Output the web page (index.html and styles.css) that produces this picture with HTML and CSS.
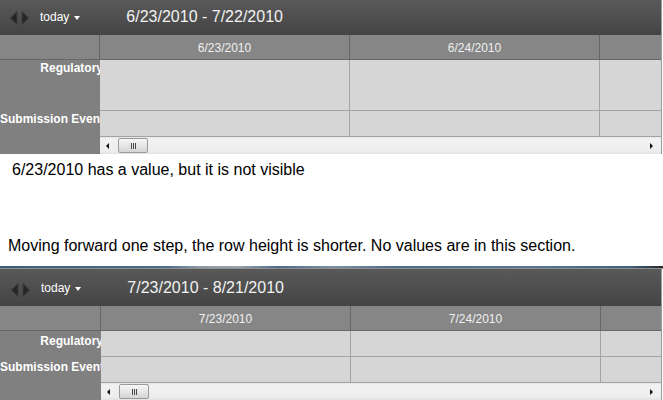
FILE: index.html
```html
<!DOCTYPE html>
<html>
<head>
<meta charset="utf-8">
<link rel="stylesheet" href="styles.css">
</head>
<body>
<div class="panel panel--a">
  <div class="toolbar">
    <svg class="nav" width="19" height="14" viewBox="0 0 19 14"><polygon points="7,0.5 0.5,7 7,13.5" /><polygon points="12,0.5 18.5,7 12,13.5" /></svg>
    <span class="today">today</span><span class="caret"></span>
    <span class="range">6/23/2010 - 7/22/2010</span>
  </div>
  <div class="grid">
    <div class="corner"></div>
    <div class="colhead">6/23/2010</div>
    <div class="colhead">6/24/2010</div>
    <div class="colhead colhead--last"></div>
    <div class="label"><span>Regulatory</span></div>
    <div class="cell"></div><div class="cell"></div><div class="cell cell--last"></div>
    <div class="label"><span>Submission Event</span></div>
    <div class="cell"></div><div class="cell"></div><div class="cell cell--last"></div>
    <div class="label"></div>
    <div class="scroll"><span class="arr-l"></span><span class="thumb"><i></i><i></i><i></i></span><span class="arr-r"></span></div>
  </div>
</div>
<p class="note note--1">6/23/2010 has a value, but it is not visible</p>
<p class="note note--2">Moving forward one step, the row height is shorter. No values are in this section.</p>
<div class="divider"></div>
<div class="panel panel--b">
  <div class="toolbar">
    <svg class="nav" width="19" height="14" viewBox="0 0 19 14"><polygon points="7,0.5 0.5,7 7,13.5" /><polygon points="12,0.5 18.5,7 12,13.5" /></svg>
    <span class="today">today</span><span class="caret"></span>
    <span class="range">7/23/2010 - 8/21/2010</span>
  </div>
  <div class="grid">
    <div class="corner"></div>
    <div class="colhead">7/23/2010</div>
    <div class="colhead">7/24/2010</div>
    <div class="colhead colhead--last"></div>
    <div class="label"><span>Regulatory</span></div>
    <div class="cell"></div><div class="cell"></div><div class="cell cell--last"></div>
    <div class="label"><span>Submission Event</span></div>
    <div class="cell"></div><div class="cell"></div><div class="cell cell--last"></div>
    <div class="label"></div>
    <div class="scroll"><span class="arr-l"></span><span class="thumb"><i></i><i></i><i></i></span><span class="arr-r"></span></div>
  </div>
</div>
</body>
</html>
```
FILE: styles.css
```css
* { box-sizing: border-box; }
body {
  margin: 0;
  width: 663px;
  height: 400px;
  overflow: hidden;
  background: #fff;
  font-family: "Liberation Sans", Arial, sans-serif;
}
.panel {
  width: 662px;
  border-right: 1px solid #9c9c9c;
}
.toolbar {
  height: 35px;
  display: flex;
  align-items: center;
  padding: 0 0 2px 10px;
  background: linear-gradient(#595959, #444444);
  color: #fff;
}
.panel--b .toolbar {
  height: 37px;
  padding: 1px 0 0 11px;
}
.nav {
  margin-top: 3px;
}
.nav polygon {
  fill: #252525;
  stroke: #3c3c3c;
  stroke-width: 1;
}
.today {
  margin-left: 11px;
  font-size: 12px;
  color: #fff;
}
.caret {
  margin-left: 5px;
  margin-top: 2px;
  width: 0;
  height: 0;
  border-left: 3.5px solid transparent;
  border-right: 3.5px solid transparent;
  border-top: 4px solid #fff;
}
.range {
  margin-left: 46px;
  font-size: 16px;
  color: #f2f2f2;
}
.grid {
  display: grid;
  grid-template-columns: 100px 250px 250px 1fr;
  grid-template-rows: 25px 51px 26px 17px;
}
.panel--b .grid {
  grid-template-columns: 101px 250px 250px 1fr;
  grid-template-rows: 25px 26px 26px 17px;
}
.corner {
  background: #868686;
  border-right: 1px solid #676767;
  border-bottom: 1px solid #676767;
}
.colhead {
  background: #868686;
  border-right: 1px solid #676767;
  border-bottom: 1px solid #676767;
  color: #f0f0f0;
  font-size: 12px;
  line-height: 14px;
  text-align: center;
  padding-top: 6px;
}
.colhead--last { border-right: none; }
.label {
  background: #808080;
  color: #fff;
  font-weight: bold;
  font-size: 12px;
  line-height: 14px;
  overflow: hidden;
  padding-top: 1px;
}
.panel--b .label { padding-top: 3px; }
.label span {
  display: block;
  width: 103px;
  text-align: right;
  white-space: nowrap;
}
.cell {
  background: #d6d6d6;
  border-right: 1px solid #a3a3a3;
  border-bottom: 1px solid #a3a3a3;
}
.cell--last { border-right: none; }
.scroll {
  grid-column: 2 / 5;
  display: flex;
  align-items: center;
  padding-left: 6px;
  background: linear-gradient(#e4e4e4 0, #f2f2f2 2px, #ededed 14px, #e2e2e2 100%);
}
.arr-l {
  width: 0;
  height: 0;
  border-top: 3.5px solid transparent;
  border-bottom: 3.5px solid transparent;
  border-right: 3px solid #111;
}
.thumb {
  margin-left: 9px;
  width: 30px;
  height: 15px;
  border: 1px solid #9a9a9a;
  border-radius: 2px;
  background: linear-gradient(#f7f7f7, #e6e6e6 50%, #d4d4d4);
  display: flex;
  justify-content: center;
  align-items: center;
  gap: 1px;
}
.thumb i {
  display: block;
  width: 1px;
  height: 6px;
  background: #4a4a4a;
}
.arr-r {
  margin-left: auto;
  margin-right: 8px;
  width: 0;
  height: 0;
  border-top: 3.5px solid transparent;
  border-bottom: 3.5px solid transparent;
  border-left: 3px solid #111;
}
.note {
  margin: 0;
  font-size: 16px;
  line-height: 18px;
  color: #000;
}
.note--1 { margin: 7px 0 0 12px; }
.note--2 { margin: 58px 0 0 8px; }
.divider {
  margin-top: 11px;
  height: 3px;
  border-bottom: 1px solid #8e8e8e;
  background: linear-gradient(to right, #3c5c80 0%, #4d6c8f 25%, #8e9aa6 30%, #9aa3ac 36%, #4b6a8c 42%, #7f8fa0 50%, #4c6b8d 60%, #5a7796 80%, #40607f 95%, #2a2a2a 100%);
}
```
